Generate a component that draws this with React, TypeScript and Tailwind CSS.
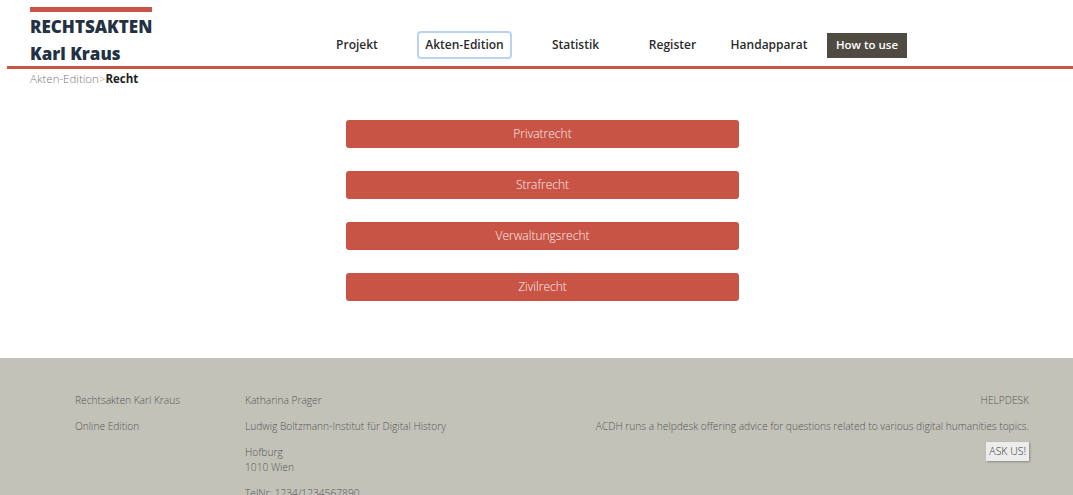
const navItems = [
  { label: "Projekt", w: "w-[60px]", ml: "ml-0" },
  { label: "Akten-Edition", w: "w-[95px]", ml: "ml-[30px]", active: true },
  { label: "Statistik", w: "w-[65px]", ml: "ml-[31px]" },
  { label: "Register", w: "w-[65px]", ml: "ml-[32px]" },
  { label: "Handapparat", w: "w-[92px]", ml: "ml-[18px]" },
]

const sections = ["Privatrecht", "Strafrecht", "Verwaltungsrecht", "Zivilrecht"]

export default function App() {
  return (
    <div className="min-h-screen bg-white font-['Open_Sans',sans-serif] text-[#333]">
      {/* Header */}
      <header className="flex h-[66px] pl-[30px]">
        <div className="flex w-[122px] flex-col">
          <div className="mt-[7px] h-[5px] w-[122px] bg-[#c85446]" />
          <div className="mt-[4px] whitespace-nowrap text-[17px] font-extrabold leading-[22px] text-[#233142]">RECHTSAKTEN</div>
          <div className="mt-[5px] whitespace-nowrap text-[17px] font-extrabold leading-[22px] text-[#233142]">Karl Kraus</div>
        </div>
        <nav className="ml-[175px] mt-[31px] flex h-[28px] items-center">
          {navItems.map((item) => (
            <a
              key={item.label}
              href="#"
              className={`${item.w} ${item.ml} flex h-[28px] items-center justify-center rounded-[4px] text-[12px] font-semibold text-[#2b2b2b] ${
                item.active ? "border-2 border-[#b8d4f4]" : ""
              }`}
            >
              {item.label}
            </a>
          ))}
          <a
            href="#"
            className="ml-[12px] flex h-[25px] w-[80px] items-center justify-center bg-[#4f4a42] text-[11.5px] font-semibold text-white"
          >
            How to use
          </a>
        </nav>
      </header>
      <div className="ml-[7px] h-[3px] bg-[#c85446]" />

      {/* Breadcrumb */}
      <div className="pl-[30px] pt-[2px] text-[11.5px] leading-[16px]">
        <span className="font-light text-[#777]">Akten-Edition</span>
        <span className="font-light text-[#e08a7e]">&gt;</span>
        <span className="font-bold text-[#222]">Recht</span>
      </div>

      {/* Rechtsgebiete */}
      <main className="flex h-[271px] flex-col items-center gap-[23px] pt-[33px]">
        {sections.map((s) => (
          <a
            key={s}
            href="#"
            className="ml-[12px] flex h-[28px] w-[393px] items-center justify-center rounded-[3px] bg-[#c85446] text-[12px] font-light text-[#fdf0ed]"
          >
            {s}
          </a>
        ))}
      </main>

      {/* Footer */}
      <footer className="flex bg-[#c3c2b9] px-[44px] pb-[30px] pt-[35px] text-[10.2px] font-light leading-[15px] text-[#555]">
        <div className="w-[201px] pl-[31px]">
          <p className="mb-[11px]">Rechtsakten Karl Kraus</p>
          <p>Online Edition</p>
        </div>
        <div className="flex-1">
          <p className="mb-[11px]">Katharina Prager</p>
          <p className="mb-[11px]">Ludwig Boltzmann-Institut für Digital History</p>
          <p className="mb-[11px]">
            Hofburg
            <br />
            1010 Wien
          </p>
          <p>TelNr: 1234/1234567890</p>
        </div>
        <div className="flex flex-col items-end">
          <p className="mb-[11px]">HELPDESK</p>
          <p className="mb-[8px]">ACDH runs a helpdesk offering advice for questions related to various digital humanities topics.</p>
          <a href="#" className="flex h-[19px] items-center bg-[#ececec] px-[3px] text-[10.5px] text-[#333] shadow-[1px_1px_2px_rgba(0,0,0,0.3)]">
            ASK US!
          </a>
        </div>
      </footer>
    </div>
  )
}
